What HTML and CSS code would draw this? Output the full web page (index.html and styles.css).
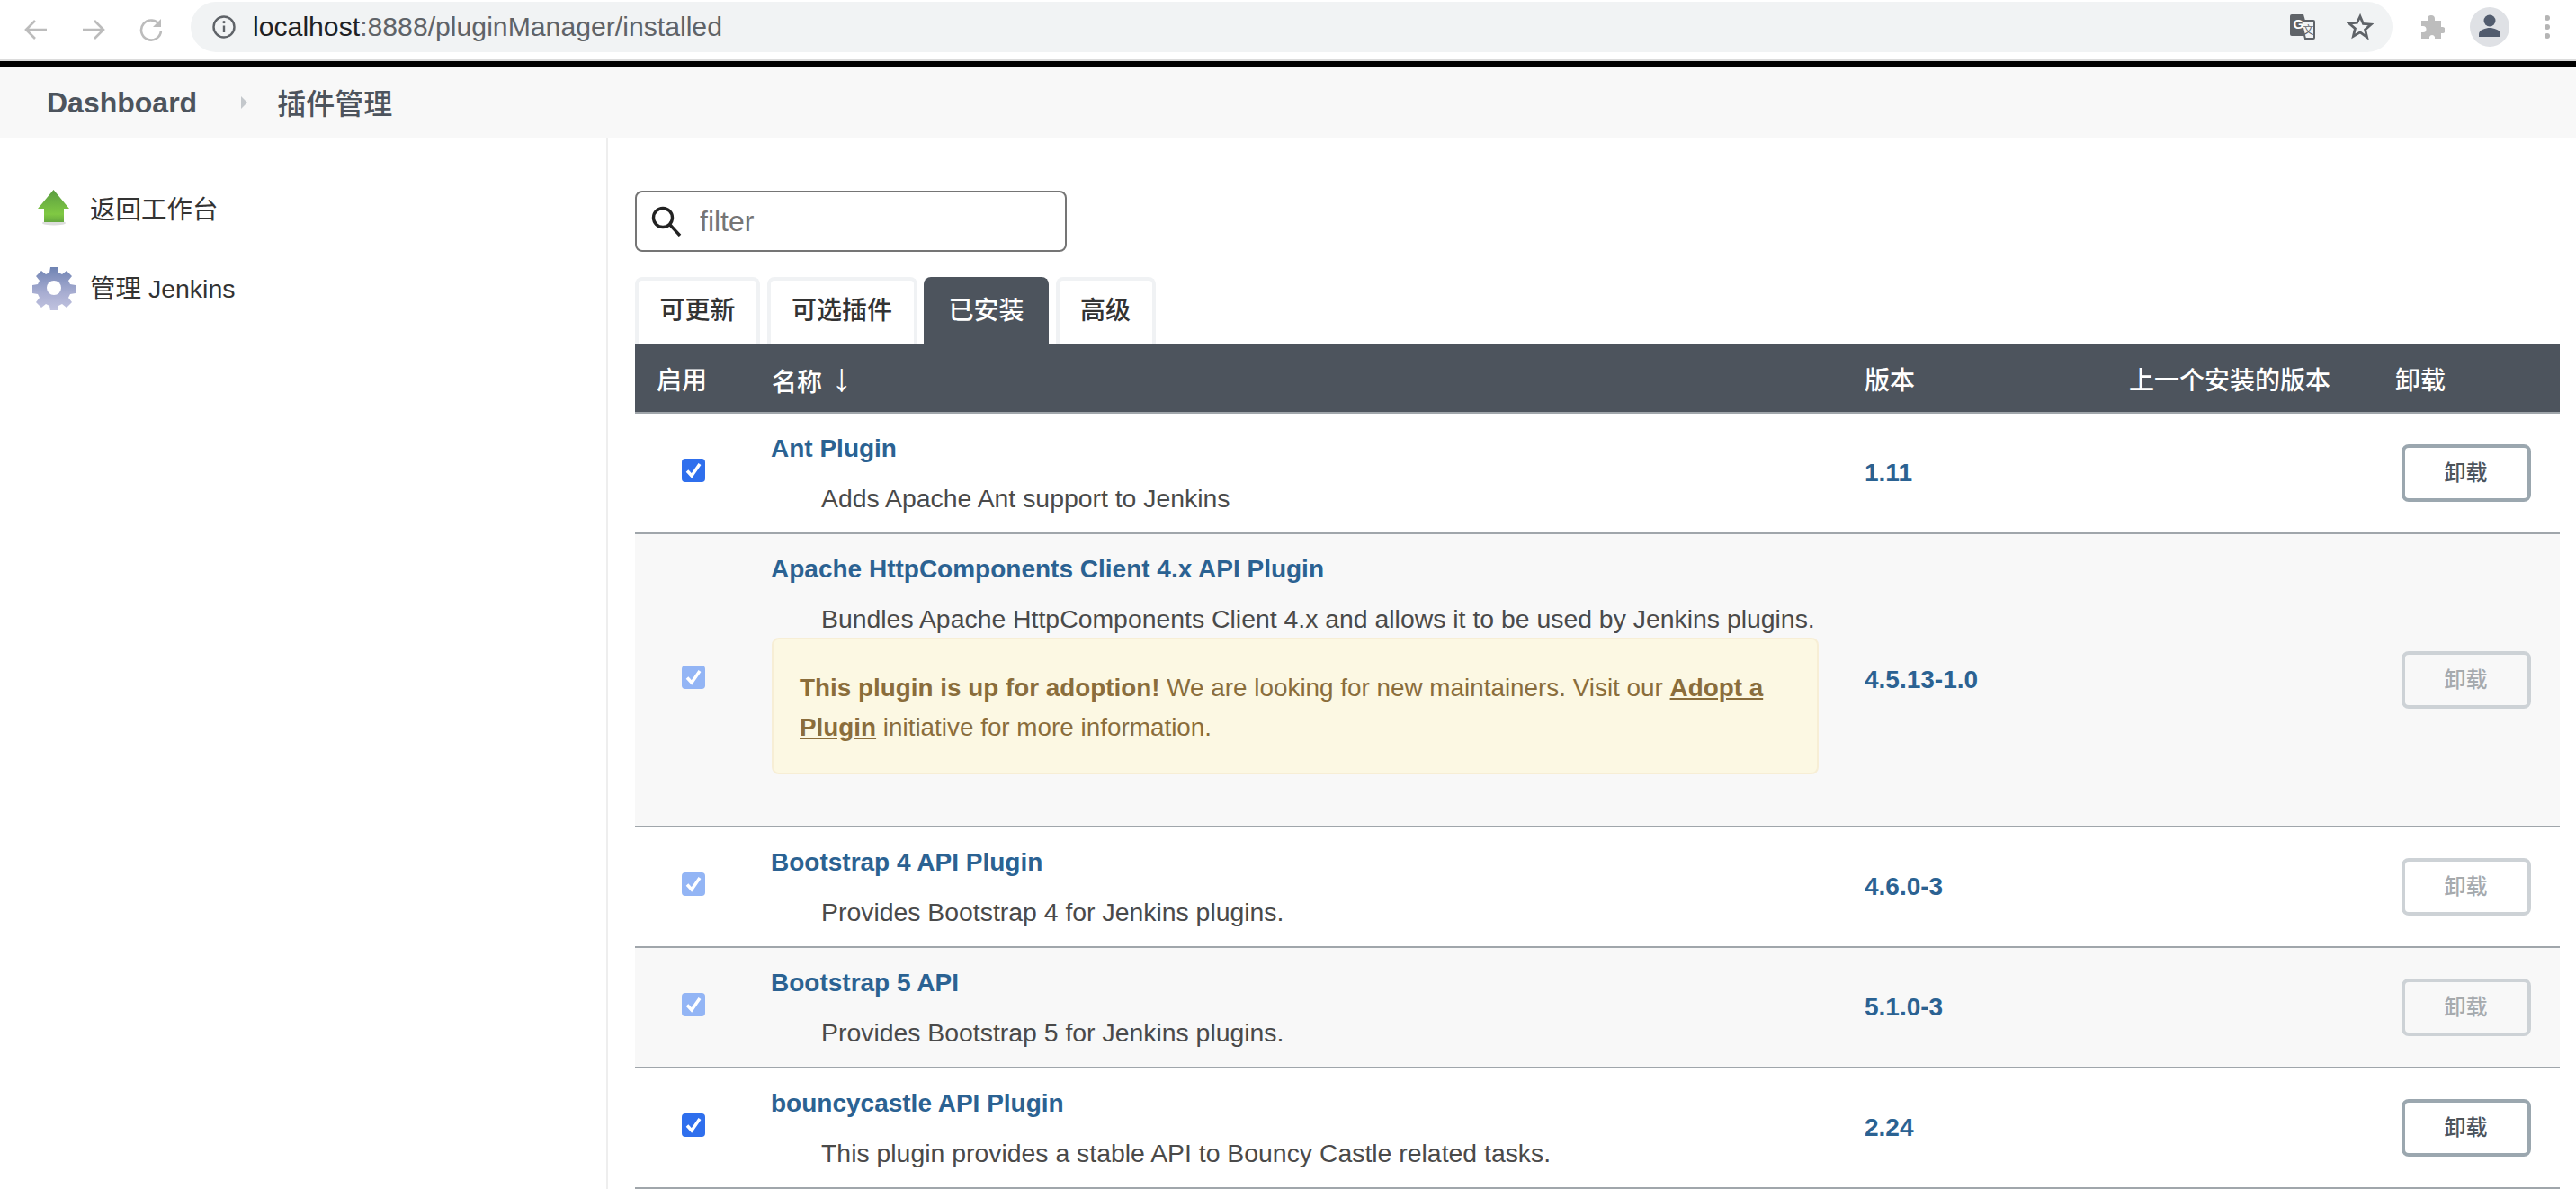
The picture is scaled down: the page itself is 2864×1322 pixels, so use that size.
FILE: index.html
```html
<!DOCTYPE html>
<html lang="zh-CN">
<head>
  <meta charset="UTF-8">
  <title>插件管理 - Jenkins</title>
  <link rel="stylesheet" href="styles.css">
</head>
<body>
  <!-- Browser toolbar -->
  <div class="toolbar">
    <div class="nav-icons">
      <svg class="nav-icon" viewBox="0 0 28 28"><path d="M26 14H3M13 4 3 14l10 10" /></svg>
      <svg class="nav-icon" viewBox="0 0 28 28"><path d="M2 14h23M15 4l10 10-10 10" /></svg>
      <svg class="nav-icon" viewBox="0 0 28 28"><path d="M23.5 9A11 11 0 1 0 25 15" /><path class="fill" d="M25 2v9h-9z" /></svg>
    </div>
    <div class="omnibox">
      <svg class="info-icon" viewBox="0 0 26 26">
        <circle cx="13" cy="13" r="11.5" />
        <path d="M13 11.5v7.5" />
        <circle class="dot" cx="13" cy="7.6" r="1.7" />
      </svg>
      <div class="url">localhost<span class="url-rest">:8888/pluginManager/installed</span></div>
      <svg class="translate-icon" viewBox="0 0 28 28">
        <path class="back" d="M2 0h13l7 24H2a2 2 0 0 1-2-2V2a2 2 0 0 1 2-2z" />
        <path class="front" d="M12 7h14a1 1 0 0 1 1 1v18a1 1 0 0 1-1 1H17z" />
        <text class="g" x="3.5" y="15.5">G</text>
        <text class="wen" x="14.5" y="22">文</text>
      </svg>
      <svg class="star-icon" viewBox="0 0 28 28"><path d="M14 3l3.2 7.6 8.2.7-6.2 5.4 1.9 8L14 19.5l-7.1 4.2 1.9-8-6.2-5.4 8.2-.7z" /></svg>
    </div>
    <svg class="puzzle-icon" viewBox="0 0 28 28"><path d="M2 7h7V5a4 4 0 0 1 8 0v2h7v7h2a3.600 3.600 0 0 1 0 7h-2v6h-7v-2a3.300 3.300 0 0 0-6 0v2H2v-7h2a3.500 3.500 0 0 0 0-7H2z" /></svg>
    <div class="avatar">
      <svg viewBox="0 0 44 44"><circle cx="22" cy="15" r="6.500" /><path d="M10 33v-3c0-5 8-7 12-7s12 2 12 7v3z" /></svg>
    </div>
    <div class="menu-dots"><i></i><i></i><i></i></div>
  </div>

  <div class="breadcrumbs">
    <a class="crumb" href="#">Dashboard</a>
    <span class="crumb-arrow"></span>
    <a class="crumb crumb-current" href="#">插件管理</a>
  </div>

  <div class="page">
    <div class="side-panel">
      <a class="task" href="#">
        <svg class="task-icon" viewBox="0 0 52 52">
          <defs>
            <linearGradient id="arrowGreen" x1="0" y1="0" x2="0" y2="1">
              <stop offset="0" stop-color="#5a9c40" />
              <stop offset="0.75" stop-color="#80c943" />
              <stop offset="1" stop-color="#65a83e" />
            </linearGradient>
            <linearGradient id="gearBlue" x1="0" y1="0" x2="0" y2="1">
              <stop offset="0" stop-color="#6f83b3" />
              <stop offset="0.6" stop-color="#a9aed2" />
              <stop offset="1" stop-color="#c2c4e0" />
            </linearGradient>
          </defs>
          <ellipse cx="26" cy="43" rx="13" ry="2.500" fill="#dddddd" />
          <path d="M25.500 6 43 27H37V42H15V27H8z" fill="url(#arrowGreen)" />
        </svg>
        <span>返回工作台</span>
      </a>
      <a class="task" href="#">
        <svg class="task-icon" viewBox="-2 -3 52 52">
          <path d="M20 1h8l1 6 4 2 5-4 6 6-4 5 2 4 6 1v9l-6 1-2 4 4 5-6 6-5-4-4 2-1 6h-8l-1-6-4-2-5 4-6-6 4-5-2-4-6-1v-9l6-1 2-4-4-5 6-6 5 4 4-2z" fill="url(#gearBlue)" />
          <circle cx="24" cy="24" r="8" fill="#fff" />
        </svg>
        <span>管理 Jenkins</span>
      </a>
    </div>

    <div class="main-panel">
      <div class="filter-box">
        <svg class="search-icon" viewBox="0 0 34 34">
          <circle cx="13" cy="13" r="10.500" />
          <path d="M21 21 32 33" />
        </svg>
        <input class="filter-input" type="text" placeholder="filter">
      </div>

      <div class="tabs">
        <a class="tab" href="#">可更新</a>
        <a class="tab" href="#">可选插件</a>
        <a class="tab active" href="#">已安装</a>
        <a class="tab" href="#">高级</a>
      </div>

      <table class="plugins">
        <colgroup>
          <col class="col-enabled"><col class="col-name"><col class="col-version"><col class="col-previous"><col class="col-uninstall">
        </colgroup>
        <thead>
          <tr>
            <th>启用</th>
            <th>名称 <span class="sort-arrow">↓</span></th>
            <th>版本</th>
            <th>上一个安装的版本</th>
            <th>卸载</th>
          </tr>
        </thead>
        <tbody>
          <tr>
            <td class="check-cell"><input type="checkbox" checked></td>
            <td class="name-cell">
              <a class="plugin-name" href="#">Ant Plugin</a>
              <div class="excerpt">Adds Apache Ant support to Jenkins</div>
            </td>
            <td><a class="version" href="#">1.11</a></td>
            <td></td>
            <td class="button-cell"><button class="uninstall">卸载</button></td>
          </tr>
          <tr class="alt">
            <td class="check-cell"><input type="checkbox" checked disabled></td>
            <td class="name-cell">
              <a class="plugin-name" href="#">Apache HttpComponents Client 4.x API Plugin</a>
              <div class="excerpt">Bundles Apache HttpComponents Client 4.x and allows it to be used by Jenkins plugins.</div>
              <div class="adopt-notice">
                <strong>This plugin is up for adoption!</strong> We are looking for new maintainers. Visit our <a href="#">Adopt a Plugin</a> initiative for more information.
              </div>
            </td>
            <td><a class="version" href="#">4.5.13-1.0</a></td>
            <td></td>
            <td class="button-cell"><button class="uninstall" disabled>卸载</button></td>
          </tr>
          <tr>
            <td class="check-cell"><input type="checkbox" checked disabled></td>
            <td class="name-cell">
              <a class="plugin-name" href="#">Bootstrap 4 API Plugin</a>
              <div class="excerpt">Provides Bootstrap 4 for Jenkins plugins.</div>
            </td>
            <td><a class="version" href="#">4.6.0-3</a></td>
            <td></td>
            <td class="button-cell"><button class="uninstall" disabled>卸载</button></td>
          </tr>
          <tr class="alt">
            <td class="check-cell"><input type="checkbox" checked disabled></td>
            <td class="name-cell">
              <a class="plugin-name" href="#">Bootstrap 5 API</a>
              <div class="excerpt">Provides Bootstrap 5 for Jenkins plugins.</div>
            </td>
            <td><a class="version" href="#">5.1.0-3</a></td>
            <td></td>
            <td class="button-cell"><button class="uninstall" disabled>卸载</button></td>
          </tr>
          <tr>
            <td class="check-cell"><input type="checkbox" checked></td>
            <td class="name-cell">
              <a class="plugin-name" href="#">bouncycastle API Plugin</a>
              <div class="excerpt">This plugin provides a stable API to Bouncy Castle related tasks.</div>
            </td>
            <td><a class="version" href="#">2.24</a></td>
            <td></td>
            <td class="button-cell"><button class="uninstall">卸载</button></td>
          </tr>
        </tbody>
      </table>
    </div>
  </div>
</body>
</html>
```

FILE: styles.css
```css
html, body {
  height: 100%;
}
body {
  font-family: "Liberation Sans", "Noto Sans CJK SC", sans-serif;
  font-size: 28px;
  margin: 0;
  color: #333;
  background-color: #fff;
  display: flex;
  flex-direction: column;
  overflow: hidden;
}
a {
  text-decoration: none;
}

/* Browser toolbar */
.toolbar {
  height: 66px;
  flex: none;
  display: flex;
  align-items: center;
  background-color: #fff;
  border-bottom: 2px solid #dcdcdc;
}
.nav-icons {
  width: 212px;
  flex: none;
  display: flex;
  gap: 36px;
  padding-left: 26px;
  box-sizing: border-box;
}
.nav-icon {
  width: 28px;
  height: 28px;
  fill: none;
  stroke: #bcbcbc;
  stroke-width: 2.6;
}
.nav-icon .fill {
  fill: #bcbcbc;
  stroke: none;
}
.omnibox {
  width: 2448px;
  height: 56px;
  flex: none;
  margin-top: -6px;
  display: flex;
  align-items: center;
  padding-left: 24px;
  box-sizing: border-box;
  background-color: #f1f3f4;
  border-radius: 28px;
}
.info-icon {
  width: 26px;
  height: 26px;
  flex: none;
  fill: none;
  stroke: #5f6368;
  stroke-width: 2.4;
}
.info-icon .dot {
  fill: #5f6368;
  stroke: none;
}
.url {
  margin-left: 19px;
  flex: 1;
  font-size: 30.2px;
  color: #202124;
}
.url-rest {
  color: #5f6368;
}
.translate-icon {
  width: 28px;
  height: 28px;
  flex: none;
  overflow: visible;
}
.translate-icon .back {
  fill: #5f6368;
}
.translate-icon .front {
  fill: #f1f3f4;
  stroke: #5f6368;
  stroke-width: 2;
}
.translate-icon .g {
  font-size: 15px;
  font-weight: bold;
  fill: #fff;
}
.translate-icon .wen {
  font-size: 12px;
  fill: #5f6368;
}
.star-icon {
  width: 30px;
  height: 30px;
  flex: none;
  margin: 0 21px 0 35px;
  fill: none;
  stroke: #5f6368;
  stroke-width: 2.6;
}
.puzzle-icon {
  width: 28px;
  height: 28px;
  flex: none;
  margin-left: 30px;
  margin-top: -6px;
  fill: #bdbdbd;
}
.avatar {
  width: 44px;
  height: 44px;
  flex: none;
  margin-left: 28px;
  margin-top: -6px;
  border-radius: 50%;
  background-color: #dfe1e5;
}
.avatar svg {
  display: block;
  fill: #525c6e;
}
.menu-dots {
  margin-left: 39px;
  margin-top: -6px;
  display: flex;
  flex-direction: column;
  gap: 4px;
}
.menu-dots i {
  display: block;
  width: 6px;
  height: 6px;
  border-radius: 50%;
  background-color: #b5b5b5;
}

/* Breadcrumb bar */
.breadcrumbs {
  height: 79px;
  flex: none;
  display: flex;
  align-items: center;
  padding-left: 52px;
  border-top: 6px solid #000;
  background-color: #f8f8f8;
}
.crumb {
  padding-top: 2px;
  font-size: 32px;
  font-weight: bold;
  color: #4d545d;
}
.crumb-current {
  padding-top: 0;
  padding-bottom: 2px;
  font-weight: 500;
}
.crumb-arrow {
  width: 0;
  height: 0;
  margin: 0 33px 0 49px;
  border-left: 7px solid #c4c8cc;
  border-top: 7px solid transparent;
  border-bottom: 7px solid transparent;
}

.page {
  flex: 1;
  display: flex;
  min-height: 0;
}

/* Side panel */
.side-panel {
  width: 676px;
  flex: none;
  box-sizing: border-box;
  padding-top: 52px;
  padding-left: 34px;
  border-right: 2px solid #eeeeee;
  font-size: 28.500px;
}
.task {
  height: 52px;
  margin-bottom: 36px;
  display: flex;
  align-items: center;
  color: #333;
}
.task span {
  padding-bottom: 2px;
}
.task-icon {
  width: 52px;
  height: 52px;
  flex: none;
  margin-right: 14px;
}

/* Main panel */
.main-panel {
  flex: 1;
  min-width: 0;
  padding: 59px 18px 0 30px;
}
.filter-box {
  width: 480px;
  height: 68px;
  display: flex;
  align-items: center;
  padding-left: 16px;
  box-sizing: border-box;
  background-color: #fff;
  border: 2px solid #757575;
  border-radius: 8px;
}
.search-icon {
  width: 34px;
  height: 34px;
  flex: none;
  fill: none;
  stroke: #222;
  stroke-width: 3.4;
}
.filter-input {
  margin-left: 20px;
  width: 380px;
  border: none;
  outline: none;
  padding: 0;
  font-family: inherit;
  font-size: 32px;
  background: transparent;
}
.filter-input::placeholder {
  color: #757575;
}

/* Tabs */
.tabs {
  display: flex;
  gap: 7.500px;
  margin-top: 28px;
}
.tab {
  height: 74px;
  line-height: 68px;
  padding: 0 23.500px;
  box-sizing: border-box;
  font-weight: 500;
  color: #333;
  background-color: #fff;
  border: 4px solid #f0f2f4;
  border-bottom: none;
  border-radius: 8px 8px 0 0;
}
.tab.active {
  color: #fff;
  background-color: #4d545d;
  border-color: #4d545d;
}

/* Plugin table */
.plugins {
  width: 2140px;
  table-layout: fixed;
  border-collapse: collapse;
}
.col-enabled { width: 128px; }
.col-name { width: 1215px; }
.col-version { width: 294px; }
.col-previous { width: 296px; }
.col-uninstall { width: 207px; }
.plugins th {
  height: 77px;
  padding: 1px 0 0 24px;
  box-sizing: border-box;
  text-align: left;
  font-weight: 500;
  color: #fff;
  background-color: #4d545d;
  border-bottom: 2px solid #a0a6ab;
}
.sort-arrow {
  margin-left: 3px;
  font-size: 44px;
  font-weight: normal;
  line-height: 1;
}
.plugins td {
  padding: 0 0 0 24px;
  border-bottom: 2px solid #a0a6ab;
}
.plugins tr.alt td {
  background-color: #f8f8f8;
}
.plugins td.check-cell {
  padding: 0 0 7px 2px;
  text-align: center;
}
.check-cell input {
  appearance: none;
  display: block;
  width: 26px;
  height: 26px;
  margin: 0 auto;
  border-radius: 4px;
  background-color: #2f6fed;
  background-image: url("data:image/svg+xml,%3Csvg xmlns='http://www.w3.org/2000/svg' viewBox='0 0 26 26'%3E%3Cpath d='M6 13.500 11 19 20 6' fill='none' stroke='white' stroke-width='3.500'/%3E%3C/svg%3E");
}
.check-cell input:disabled {
  background-color: #93b5f5;
}
.plugins td.name-cell {
  height: 132px;
  padding-top: 18px;
  padding-bottom: 16px;
  box-sizing: border-box;
  vertical-align: top;
}
.plugin-name {
  display: block;
  margin-left: -1px;
  line-height: 42px;
  font-weight: bold;
  color: #2b6292;
}
.excerpt {
  line-height: 42px;
  margin-top: 13px;
  margin-bottom: 1px;
  margin-left: 55px;
  font-size: 28.400px;
  color: #4a4a4a;
  white-space: nowrap;
}
.adopt-notice {
  width: 1164px;
  box-sizing: border-box;
  margin-top: -1px;
  margin-bottom: 41px;
  padding: 32px 28px 28px 29px;
  font-size: 27.850px;
  line-height: 44px;
  color: #8a6d3b;
  background-color: #fcf8e3;
  border: 2px solid #f7eed5;
  border-radius: 8px;
}
.adopt-notice a {
  font-weight: bold;
  color: #8a6d3b;
  text-decoration: underline;
}
.version {
  font-weight: bold;
  color: #2b6292;
}
.plugins td.button-cell {
  padding: 0 2px 0 0;
  text-align: center;
}
.uninstall {
  width: 144px;
  height: 64px;
  padding: 0 0 5px;
  font-family: inherit;
  font-size: 24px;
  font-weight: 500;
  color: #4d545d;
  background-color: #fff;
  border: 4px solid #9ba7af;
  border-radius: 8px;
}
.uninstall:disabled {
  color: #a6aaae;
  background-color: transparent;
  border-color: #cdd2d6;
}
```
